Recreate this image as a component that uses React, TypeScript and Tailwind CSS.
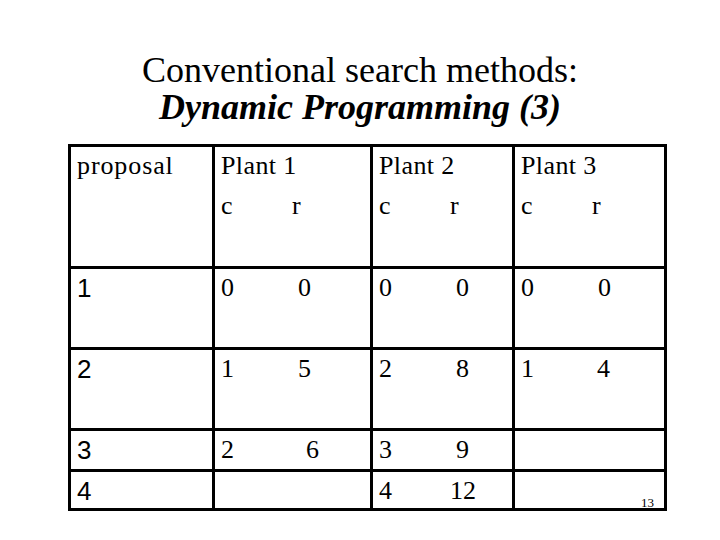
import React from "react";

type Pair = { a: string; b: string; gap: number };

const serif = "font-['Liberation_Serif','Times_New_Roman',serif]";
const sans = "font-['Liberation_Sans',Arial,sans-serif]";

const rows: { id: string; h: string; cells: (Pair | null)[] }[] = [
  {
    id: "1",
    h: "h-[81px]",
    cells: [
      { a: "0", b: "0", gap: 77 },
      { a: "0", b: "0", gap: 77 },
      { a: "0", b: "0", gap: 77 },
    ],
  },
  {
    id: "2",
    h: "h-[81px]",
    cells: [
      { a: "1", b: "5", gap: 77 },
      { a: "2", b: "8", gap: 77 },
      { a: "1", b: "4", gap: 76 },
    ],
  },
  {
    id: "3",
    h: "h-[41px]",
    cells: [{ a: "2", b: "6", gap: 85 }, { a: "3", b: "9", gap: 77 }, null],
  },
  {
    id: "4",
    h: "h-[39px]",
    cells: [null, { a: "4", b: "12", gap: 71 }, null],
  },
];

const colW = ["w-[158px]", "w-[142px]", "w-[152px]"];

const Cell = ({ w, h, children }: { w: string; h: string; children?: React.ReactNode }) => (
  <div className={`${w} ${h} shrink-0 border-r-[3px] border-b-[3px] border-black pl-[6px] pt-[5px]`}>
    {children}
  </div>
);

const PairText = ({ p }: { p: Pair }) => (
  <div className="flex text-[26px] leading-[28px]">
    <span className="shrink-0" style={{ width: p.gap }}>
      {p.a}
    </span>
    <span>{p.b}</span>
  </div>
);

export default function App() {
  return (
    <div className={`relative w-[720px] h-[540px] bg-white text-black ${serif}`}>
      {/* Title */}
      <div className="pt-[52px] text-center text-[36px] leading-[37px]">
        <div>Conventional search methods:</div>
        <div className="font-bold italic">Dynamic Programming (3)</div>
      </div>

      {/* Table */}
      <div className="mt-[18px] ml-[68px] w-[599px] border-l-[3px] border-t-[3px] border-black">
        <div className="flex">
          <Cell w="w-[144px]" h="h-[122px]">
            <div className="text-[26px] leading-[28px] tracking-[0.9px]">proposal</div>
          </Cell>
          {["Plant 1", "Plant 2", "Plant 3"].map((name, i) => (
            <Cell key={name} w={colW[i]} h="h-[122px]">
              <div className="text-[26px] leading-[28px] tracking-[0.4px]">{name}</div>
              <div className="mt-[12px]">
                <PairText p={{ a: "c", b: "r", gap: 71 }} />
              </div>
            </Cell>
          ))}
        </div>

        {rows.map((r) => (
          <div key={r.id} className="flex">
            <Cell w="w-[144px]" h={r.h}>
              <div className={`${sans} text-[26px] leading-[28px]`}>{r.id}</div>
            </Cell>
            {r.cells.map((c, i) => (
              <Cell key={i} w={colW[i]} h={r.h}>
                {c && <PairText p={c} />}
              </Cell>
            ))}
          </div>
        ))}
      </div>

      {/* Slide number */}
      <div className="absolute left-[641px] top-[496px] text-[13px] leading-none">13</div>
    </div>
  );
}
